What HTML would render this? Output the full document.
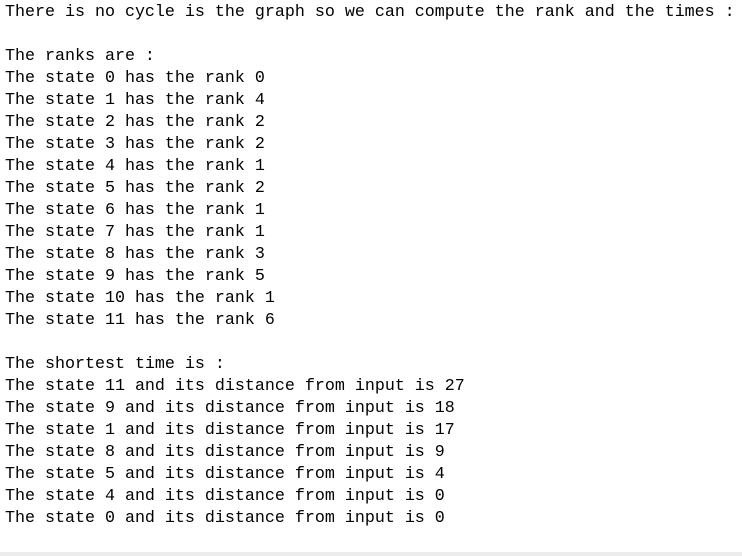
<!DOCTYPE html>
<html><head><style>
html,body{margin:0;padding:0;background:#fff;width:742px;height:556px;overflow:hidden;position:relative}
pre{margin:0;position:absolute;left:5px;top:2px;font-family:"Liberation Mono",monospace;font-size:16.67px;line-height:22px;color:#000}
.bar{position:absolute;left:0;right:0;top:552px;height:4px;background:#ececec}
</style></head><body>
<pre>There is no cycle is the graph so we can compute the rank and the times :

The ranks are :
The state 0 has the rank 0
The state 1 has the rank 4
The state 2 has the rank 2
The state 3 has the rank 2
The state 4 has the rank 1
The state 5 has the rank 2
The state 6 has the rank 1
The state 7 has the rank 1
The state 8 has the rank 3
The state 9 has the rank 5
The state 10 has the rank 1
The state 11 has the rank 6

The shortest time is :
The state 11 and its distance from input is 27
The state 9 and its distance from input is 18
The state 1 and its distance from input is 17
The state 8 and its distance from input is 9
The state 5 and its distance from input is 4
The state 4 and its distance from input is 0
The state 0 and its distance from input is 0</pre>
<div class="bar"></div>
</body></html>
